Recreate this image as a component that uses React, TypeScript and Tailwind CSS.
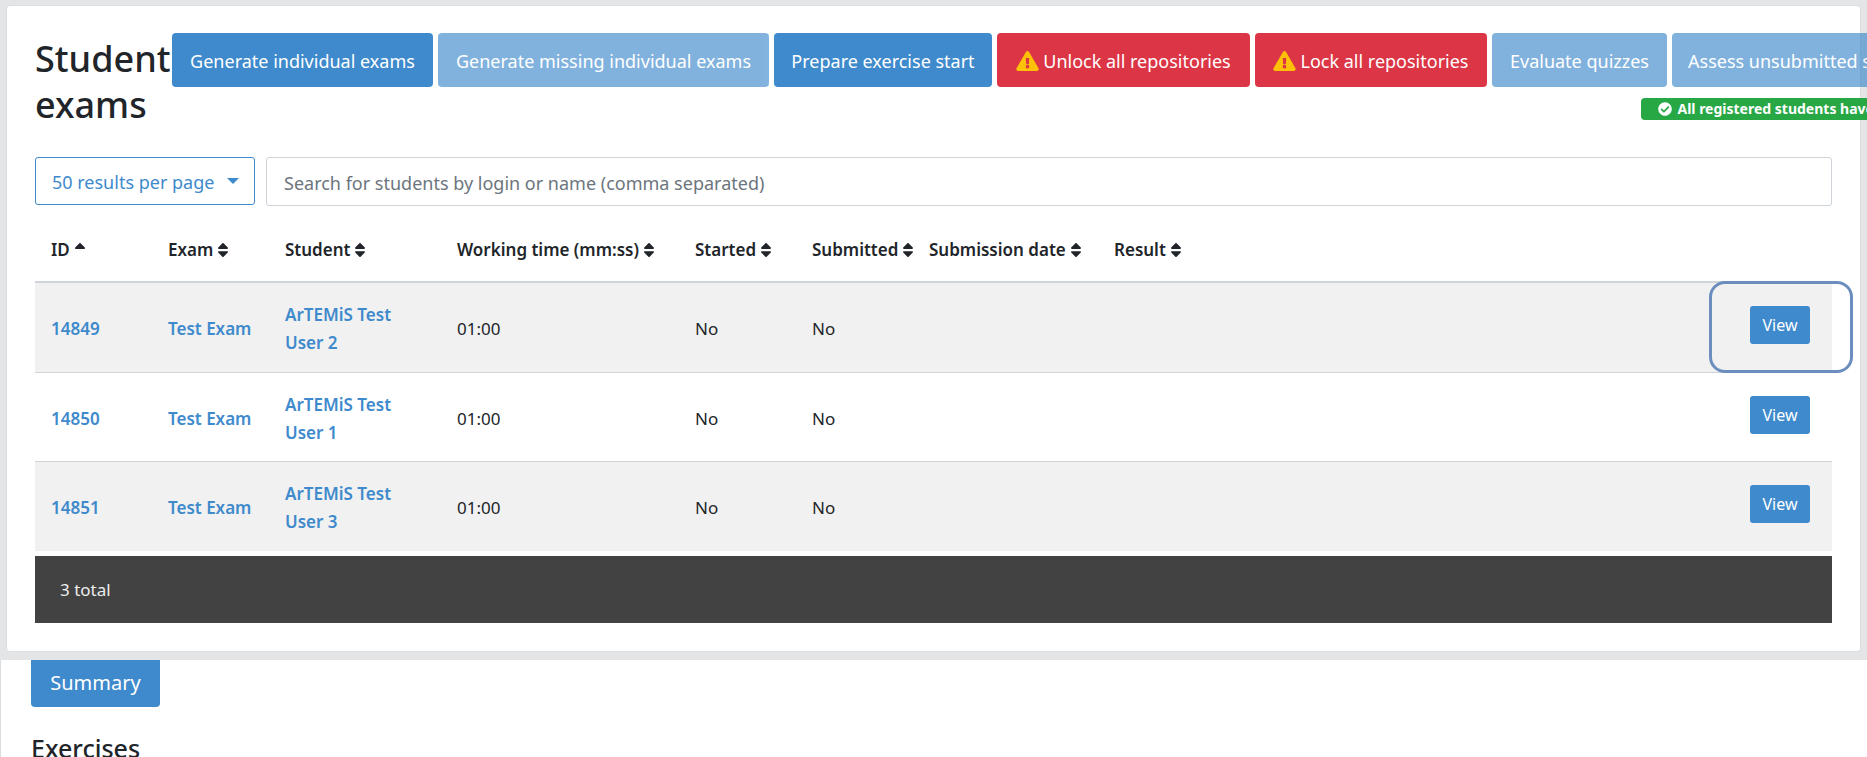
import React from "react";
import { FaCheckCircle, FaExclamationTriangle, FaSort, FaSortUp } from "react-icons/fa";

type Action = { label: string; tone: string; width: string; disabled?: boolean; warn?: boolean };

const actions: Action[] = [
  { label: "Generate individual exams", tone: "bg-[#3e8acc]", width: "min-w-[261px]" },
  { label: "Generate missing individual exams", tone: "bg-[#3e8acc]", width: "min-w-[331px]", disabled: true },
  { label: "Prepare exercise start", tone: "bg-[#3e8acc]", width: "min-w-[218px]" },
  { label: "Unlock all repositories", tone: "bg-[#dc3545]", width: "min-w-[253px]", warn: true },
  { label: "Lock all repositories", tone: "bg-[#dc3545]", width: "min-w-[232px]", warn: true },
  { label: "Evaluate quizzes", tone: "bg-[#3e8acc]", width: "min-w-[175px]", disabled: true },
  { label: "Assess unsubmitted student exams", tone: "bg-[#3e8acc]", width: "min-w-[331px]", disabled: true },
];

const columns = [
  { label: "ID", width: "w-[117px]", sorted: true },
  { label: "Exam", width: "w-[117px]" },
  { label: "Student", width: "w-[172px]" },
  { label: "Working time (mm:ss)", width: "w-[238px]" },
  { label: "Started", width: "w-[117px]" },
  { label: "Submitted", width: "w-[117px]" },
  { label: "Submission date", width: "w-[185px]" },
  { label: "Result", width: "w-[117px]" },
];

const rows = [
  { id: "14849", exam: "Test Exam", student: "ArTEMiS Test User 2", time: "01:00", highlighted: true },
  { id: "14850", exam: "Test Exam", student: "ArTEMiS Test User 1", time: "01:00" },
  { id: "14851", exam: "Test Exam", student: "ArTEMiS Test User 3", time: "01:00" },
];

function ActionButton({ label, tone, width, disabled, warn }: Action) {
  return (
    <button
      type="button"
      disabled={disabled}
      className={`flex h-[54px] shrink-0 items-center justify-center gap-1 rounded-[4px] px-3 pt-px text-lg whitespace-nowrap text-white disabled:opacity-65 ${tone} ${width}`}
    >
      {warn && <FaExclamationTriangle className="h-5 w-[23px] text-[#ffc107]" />}
      {label}
    </button>
  );
}

function ExamTable() {
  return (
    <table className="w-full table-fixed border-collapse text-left text-[17px] leading-7">
      <thead>
        <tr className="h-[76px] border-b-2 border-[#ced4da]">
          {columns.map((c) => (
            <th key={c.label} scope="col" className={`pt-3 pl-4 font-semibold whitespace-nowrap ${c.width}`}>
              <button type="button" className="flex items-center gap-1">
                {c.label}
                {c.sorted ? <FaSortUp className="h-[18px] w-3" /> : <FaSort className="h-[18px] w-3" />}
              </button>
            </th>
          ))}
          <th aria-label="Actions" />
        </tr>
      </thead>
      <tbody>
        {rows.map((r) => (
          <tr key={r.id} className="h-[90px] border-b border-[#ced4da] last:border-b-0 odd:bg-[#f1f1f1] even:h-[89px]">
            <td className="pt-1 pl-4 font-semibold text-[#3e8acc]"><a href="#exam">{r.id}</a></td>
            <td className="pt-1 pl-4 font-semibold whitespace-nowrap text-[#3e8acc]"><a href="#exam">{r.exam}</a></td>
            <td className="pt-1 pr-8 pl-4 font-semibold text-[#3e8acc]"><a href="#student">{r.student}</a></td>
            <td className="pt-1 pl-4">{r.time}</td>
            <td className="pt-1 pl-4">No</td>
            <td className="pt-1 pl-4">No</td>
            <td />
            <td />
            <td className="relative pr-[22px] pb-1 text-right">
              <a href="#view" className="inline-flex h-[38px] w-[60px] items-center justify-center rounded-[3px] bg-[#3e8acc] align-middle text-base text-white">
                View
              </a>
              {r.highlighted && (
                <span className="pointer-events-none absolute -top-[2px] -right-[21px] h-[92px] w-[144px] rounded-2xl border-3 border-[#6c8ebf]" />
              )}
            </td>
          </tr>
        ))}
      </tbody>
    </table>
  );
}

export default function App() {
  return (
    <div className="h-screen overflow-hidden bg-white font-['Noto_Sans',sans-serif] text-[#212529]">
      <main className="bg-[#e4e5e6] px-[6px] pt-[5px] pb-2">
        <section className="rounded-[4px] border border-[#dcdddf] bg-white px-7 pt-[27px] pb-7">
          <header className="flex h-[124px] items-start">
            <h1 className="w-[137px] shrink-0 pt-[3px] text-4xl leading-[46px] font-medium">Student exams</h1>
            <div className="flex shrink-0 flex-col items-end gap-[11px]">
              <div className="flex gap-[5px]">
                {actions.map((a) => (
                  <ActionButton key={a.label} {...a} />
                ))}
              </div>
              <span className="flex h-[22px] items-center gap-[5px] rounded-[4px] bg-[#28a745] px-[17px] text-sm font-bold whitespace-nowrap text-white">
                <FaCheckCircle className="h-[14px] w-[14px]" />
                All registered students have a student exam
              </span>
            </div>
          </header>

          <div className="flex items-start gap-[11px]">
            <label className="relative flex shrink-0 text-[#3e8acc]">
              <select aria-label="Results per page" className="h-12 w-[220px] appearance-none rounded-[3px] border border-[#3e8acc] bg-white pt-[2px] pl-4 text-lg">
                <option>50 results per page</option>
              </select>
              <svg viewBox="0 0 12 6" className="pointer-events-none absolute top-[21px] right-4 h-[6px] w-3" fill="currentColor">
                <path d="M0 0h12L6 6z" />
              </svg>
            </label>
            <input
              type="text"
              aria-label="Search for students"
              placeholder="Search for students by login or name (comma separated)"
              className="h-[49px] min-w-0 flex-1 rounded-[3px] border border-[#ced4da] px-[17px] pt-[2px] text-lg placeholder:text-[#6c757d]"
            />
          </div>

          <ExamTable />
          <footer className="mt-[5px] flex h-[67px] items-center bg-[#424242] px-[25px] text-[17px] text-[#ededed]">3 total</footer>
        </section>
      </main>

      <section className="border-l border-[#dcdddf] px-[30px]">
        <button type="button" className="flex h-[47px] w-[129px] items-center justify-center rounded-b-[4px] bg-[#3e8acc] pb-[2px] text-xl text-white">
          Summary
        </button>
        <h2 className="mt-[23px] text-[25px] leading-9 font-medium">Exercises</h2>
      </section>
    </div>
  );
}
